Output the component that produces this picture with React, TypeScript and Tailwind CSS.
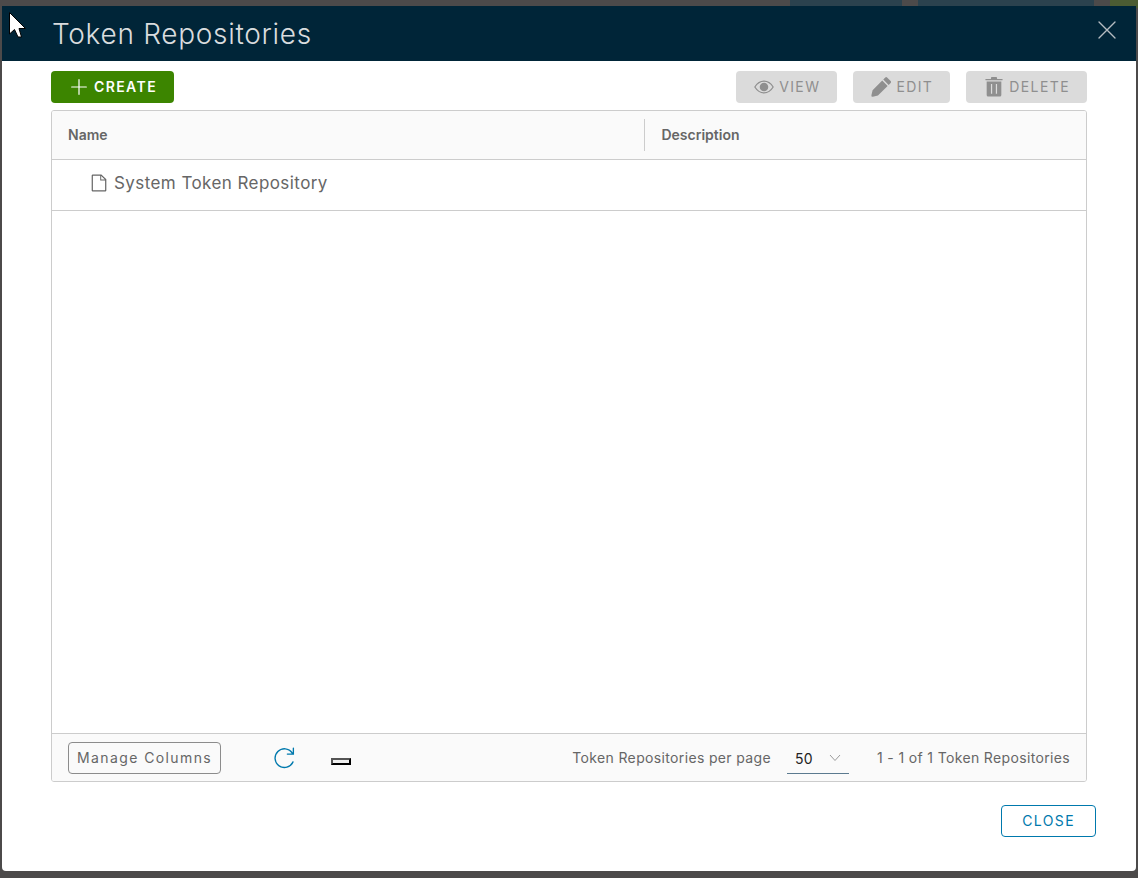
import type { ReactNode } from 'react';

const columns = ['Name', 'Description'];

const repositories = [{ name: 'System Token Repository', description: '' }];

const Icon = ({ size = 'size-[22px]', children }: { size?: string; children: ReactNode }) => (
  <svg viewBox="0 0 36 36" fill="currentColor" className={`shrink-0 ${size}`} aria-hidden="true">
    {children}
  </svg>
);

const ToolbarButton = ({ icon, label }: { icon: ReactNode; label: string }) => (
  <button
    type="button"
    disabled
    className="flex h-8 items-center gap-1 rounded-sm bg-[#dbdbdb] px-[17px] text-sm tracking-widest text-[#8f8f8f]"
  >
    {icon}
    {label}
  </button>
);

const Backdrop = () => (
  <div className="absolute inset-x-0 top-0 flex h-2 justify-end gap-4" aria-hidden="true">
    <div className="w-28 bg-[#2b424e]" />
    <div className="w-44 bg-[#2b424e]" />
    <div className="w-7 bg-[#4c5c33]" />
  </div>
);

const Header = () => (
  <header className="flex h-[55px] items-start justify-between bg-[#002538] pr-[17px] pl-[50px]">
    <h1 className="pt-2 text-[28px] leading-10 font-light tracking-wide text-[#d9dcde]">
      Token Repositories
    </h1>
    <button type="button" aria-label="Close dialog" className="mt-3 text-[#b5bcc1]">
      <Icon size="size-6">
        <path
          d="M6 6 30 30M30 6 6 30"
          fill="none"
          stroke="currentColor"
          strokeWidth="2"
          strokeLinecap="round"
        />
      </Icon>
    </button>
  </header>
);

const Toolbar = () => (
  <div className="flex justify-between">
    <button
      type="button"
      className="flex h-8 items-center gap-1 rounded-sm bg-[#3c8500] px-[17px] text-sm font-semibold tracking-widest text-white"
    >
      <Icon>
        <path d="M30,17H19V6a1,1,0,1,0-2,0V17H6a1,1,0,0,0,0,2H17V30a1,1,0,1,0,2,0V19H30a1,1,0,0,0,0-2Z" />
      </Icon>
      CREATE
    </button>
    <div className="flex gap-4">
      <ToolbarButton
        label="VIEW"
        icon={
          <Icon>
            <path
              d="M3 18C7 11.5 12 8.500 18 8.500S29 11.5 33 18C29 24.5 24 27.5 18 27.5S7 24.5 3 18Z"
              fill="none"
              stroke="currentColor"
              strokeWidth="2"
            />
            <circle cx="18" cy="18" r="7" />
          </Icon>
        }
      />
      <ToolbarButton
        label="EDIT"
        icon={
          <Icon>
            <path d="M4.22,23.2l-1.9,8.2a2.06,2.06,0,0,0,2,2.5,2.14,2.14,0,0,0,.43,0L13,32,28.84,16.22,20,7.4Z" />
            <path d="M33.82,8.32l-5.9-5.9a2.07,2.07,0,0,0-2.92,0L21.72,5.7l8.83,8.83,3.28-3.28A2.07,2.07,0,0,0,33.82,8.32Z" />
          </Icon>
        }
      />
      <ToolbarButton
        label="DELETE"
        icon={
          <Icon>
            <path d="M4 5h9V3a1.5 1.5 0 0 1 1.5-1.5h7A1.5 1.5 0 0 1 23 3v2h9v2H4Z" />
            <path
              fillRule="evenodd"
              d="M6 9H30V31a2.5 2.5 0 0 1-2.5 2.5h-19A2.5 2.5 0 0 1 6 31ZM13 13V29h2V13ZM21 13V29h2V13Z"
            />
          </Icon>
        }
      />
    </div>
  </div>
);

const RepositoryTable = () => (
  <table className="w-full table-fixed border-collapse text-left">
    <thead>
      <tr className="h-12 border-b border-[#cccccc] bg-[#fafafa]">
        {columns.map((column, i) => (
          <th
            key={column}
            scope="col"
            className={`py-2 text-sm font-semibold text-[#666666] ${i === 0 ? 'w-[57.3%]' : ''}`}
          >
            <div className={`flex h-8 items-center pl-4 ${i > 0 ? 'border-l border-[#cccccc]' : ''}`}>
              {column}
            </div>
          </th>
        ))}
      </tr>
    </thead>
    <tbody>
      {repositories.map((repository) => (
        <tr key={repository.name} className="h-[51px] border-b border-[#cccccc] text-[#666666]">
          <td className="pb-1 pl-9">
            <div className="flex items-center gap-1 text-[17px] leading-6 tracking-wide">
              <Icon>
                <path d="M21.89,4H7.83A1.88,1.88,0,0,0,6,5.91V30.09A1.88,1.88,0,0,0,7.83,32H28.17A1.88,1.88,0,0,0,30,30.09V11.92Zm-.3,2.49,6,5.9h-6ZM8,30V6H20v8h8V30Z" />
              </Icon>
              {repository.name}
            </div>
          </td>
          <td className="pl-4">{repository.description}</td>
        </tr>
      ))}
    </tbody>
  </table>
);

const TableFooter = () => (
  <div className="flex h-12 items-center justify-between border-t border-[#cccccc] bg-[#fafafa] px-4 text-sm text-[#666666]">
    <div className="flex items-center">
      <button
        type="button"
        className="h-8 rounded-sm border border-[#8c8c8c] px-2 tracking-widest"
      >
        Manage Columns
      </button>
      <button type="button" aria-label="Refresh" className="ml-[52px] text-[#0079ad]">
        <Icon>
          <path d="M22.4,11.65a1.09,1.09,0,0,0,1.09,1.09H34.43V1.81a1.09,1.09,0,1,0-2.19,0V8.95a16.41,16.41,0,1,0,1.47,15.86,1.12,1.12,0,0,0-2.05-.9,14.18,14.18,0,1,1-1.05-13.36H23.5A1.09,1.09,0,0,0,22.4,11.65Z" />
        </Icon>
      </button>
      <button
        type="button"
        aria-label="Export"
        className="mt-2 ml-9 h-[7px] w-5 border-2 border-black bg-[#efefef] [border-style:outset]"
      />
    </div>
    <div className="flex items-center tracking-wide">
      <label htmlFor="page-size">Token Repositories per page</label>
      <div className="relative ml-4">
        <select
          id="page-size"
          defaultValue="50"
          className="h-8 w-[62px] appearance-none border-b border-[#5b7a8f] bg-transparent px-2 pt-1 text-sm text-[#222222]"
        >
          <option>10</option>
          <option>20</option>
          <option>50</option>
          <option>100</option>
        </select>
        <svg
          viewBox="0 0 12 8"
          className="pointer-events-none absolute top-3 right-2 h-2 w-3 text-[#9a9a9a]"
          fill="none"
          stroke="currentColor"
          aria-hidden="true"
        >
          <path d="M1 1 6 6.5 11 1" />
        </svg>
      </div>
      <span className="ml-7">1 - 1 of 1 Token Repositories</span>
    </div>
  </div>
);

const Cursor = () => (
  <svg viewBox="0 0 18 26" className="absolute top-3 left-2 h-[26px] w-[18px]" aria-hidden="true">
    <path d="M1.5 0.5V22L6.5 17.5 10 25H13.5L11 16.5H17.5Z" fill="white" stroke="black" />
  </svg>
);

const App = () => (
  <div className="relative flex min-h-screen flex-col bg-[#4c4a4a] px-[2px] pt-[6px] pb-[7px] font-['Inter',sans-serif]">
    <Backdrop />
    <div
      role="dialog"
      aria-label="Token Repositories"
      className="relative flex flex-1 flex-col overflow-hidden rounded-b-sm bg-white"
    >
      <Header />
      <main className="flex flex-1 flex-col gap-[7px] px-[49px] pt-[10px]">
        <Toolbar />
        <section className="flex flex-1 flex-col overflow-hidden rounded-[3px] border border-[#cccccc]">
          <div className="flex-1">
            <RepositoryTable />
          </div>
          <TableFooter />
        </section>
      </main>
      <footer className="flex justify-end px-10 pt-[23px] pb-[34px]">
        <button
          type="button"
          className="h-8 rounded-sm border border-[#0079ad] px-5 text-sm tracking-widest text-[#0079ad]"
        >
          CLOSE
        </button>
      </footer>
    </div>
    <Cursor />
  </div>
);

export default App;
